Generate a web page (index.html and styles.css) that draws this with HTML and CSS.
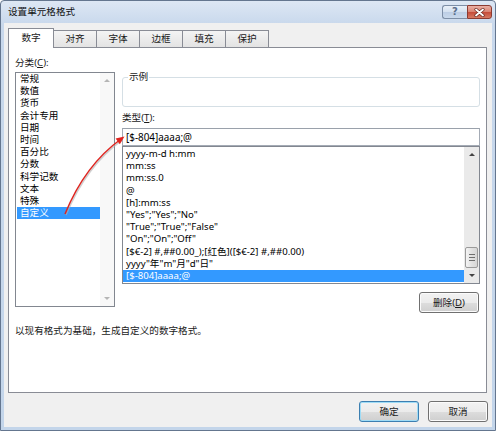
FILE: index.html
```html
<!DOCTYPE html>
<html lang="zh-CN">
<head>
<meta charset="utf-8">
<title>设置单元格格式</title>
<link rel="stylesheet" href="styles.css">
</head>
<body>
<div class="window">
  <div class="titlebar">
    <span class="title">设置单元格格式</span>
    <div class="caption-btns">
      <span class="cbtn help">?</span>
      <span class="cbtn close">
        <svg width="11" height="9" viewBox="0 0 11 9"><path d="M2 1.5 L9 7.5 M9 1.5 L2 7.5" stroke="#6b2a22" stroke-width="3.2" stroke-linecap="round"/><path d="M2 1.5 L9 7.5 M9 1.5 L2 7.5" stroke="#ffffff" stroke-width="1.8" stroke-linecap="round"/></svg>
      </span>
    </div>
  </div>
  <div class="client">
    <div class="tabs">
      <div class="tab active">数字</div>
      <div class="tab">对齐</div>
      <div class="tab">字体</div>
      <div class="tab">边框</div>
      <div class="tab">填充</div>
      <div class="tab">保护</div>
    </div>
    <div class="panel">
      <div class="main">
        <div class="left">
          <div class="label">分类(<u>C</u>):</div>
          <div class="listbox cat">
            <div class="items">
              <div class="item">常规</div>
              <div class="item">数值</div>
              <div class="item">货币</div>
              <div class="item">会计专用</div>
              <div class="item">日期</div>
              <div class="item">时间</div>
              <div class="item">百分比</div>
              <div class="item">分数</div>
              <div class="item">科学记数</div>
              <div class="item">文本</div>
              <div class="item">特殊</div>
              <div class="item selected">自定义</div>
            </div>
            <div class="vscroll disabled">
              <span class="sbtn"><span class="arr up"></span></span>
              <span class="track"></span>
              <span class="sbtn"><span class="arr down"></span></span>
            </div>
          </div>
        </div>
        <div class="right">
          <fieldset class="sample">
            <legend>示例</legend>
            <div class="sample-body"></div>
          </fieldset>
          <div class="label type-label">类型(<u>T</u>):</div>
          <div class="input">[$-804]aaaa;@</div>
          <div class="listbox fmt">
            <div class="items">
              <div class="item">yyyy-m-d h:mm</div>
              <div class="item">mm:ss</div>
              <div class="item">mm:ss.0</div>
              <div class="item">@</div>
              <div class="item">[h]:mm:ss</div>
              <div class="item">"Yes";"Yes";"No"</div>
              <div class="item">"True";"True";"False"</div>
              <div class="item">"On";"On";"Off"</div>
              <div class="item">[$€-2] #,##0.00_);[红色]([$€-2] #,##0.00)</div>
              <div class="item">yyyy"年"m"月"d"日"</div>
              <div class="item selected">[$-804]aaaa;@</div>
            </div>
            <div class="vscroll">
              <span class="sbtn"><span class="arr up"></span></span>
              <span class="track"></span>
              <span class="thumb"><i></i><i></i><i></i></span>
              <span class="sbtn"><span class="arr down"></span></span>
            </div>
          </div>
          <div class="btnrow">
            <button class="btn del">删除(<u>D</u>)</button>
          </div>
        </div>
      </div>
      <div class="desc">以现有格式为基础，生成自定义的数字格式。</div>
    </div>
    <div class="footer">
      <button class="btn default">确定</button>
      <button class="btn">取消</button>
    </div>
  </div>
  <svg class="arrow" width="496" height="431" viewBox="0 0 496 431">
    <path d="M66 215 Q 86 166 122 140" fill="none" stroke="#b0b0b0" stroke-width="1.6" opacity="0.6"/>
    <path d="M65 214 Q 85 165 121 139" fill="none" stroke="#e0241f" stroke-width="1.5"/>
    <polygon points="124.5,136.6 119.8,144.3 115.6,138.5" fill="#e0241f"/>
  </svg>
</div>
</body>
</html>
```

FILE: styles.css
```css
html, body {
  margin: 0;
  padding: 0;
}
body {
  width: 496px;
  height: 431px;
  overflow: hidden;
  font-family: "Noto Sans", "Noto Sans CJK SC", sans-serif;
  font-size: 9.6px;
  color: #1a1a1a;
  background: #ffffff;
}
.window {
  position: relative;
  width: 496px;
  height: 431px;
  box-sizing: border-box;
  border: 1px solid #64768f;
  border-radius: 4px 4px 0 0;
  background: linear-gradient(to bottom, #dde7f4 0, #c8d8ec 24px, #c3d5ea 100%);
  display: flex;
  flex-direction: column;
  padding: 0 3px 3px 3px;
}
.titlebar {
  height: 22px;
  flex: none;
  display: flex;
  justify-content: space-between;
  align-items: flex-start;
}
.title {
  padding: 5px 0 0 4px;
  line-height: 12px;
  color: #111;
}
.caption-btns {
  display: flex;
  margin-top: 4px;
}
.cbtn {
  width: 25px;
  height: 14px;
  box-sizing: border-box;
  display: flex;
  align-items: center;
  justify-content: center;
}
.help {
  border: 1px solid #7d8ea6;
  border-right: none;
  border-radius: 3px 0 0 3px;
  background: linear-gradient(to bottom, #e9f0f8 0, #d3e0ef 50%, #bccde4 51%, #c9d9ec 100%);
  color: #5c6f8c;
  font-family: "DejaVu Sans", sans-serif;
  font-weight: bold;
  font-size: 10px;
  line-height: 12px;
}
.close {
  border: 1px solid #8b3b32;
  border-radius: 0 3px 3px 0;
  background: linear-gradient(to bottom, #eab0a5 0, #d98170 50%, #c54a38 51%, #d77a63 100%);
}
.client {
  flex: 1;
  background: #f0f0f0;
  padding: 5px 4px 5px 4px;
  display: flex;
  flex-direction: column;
}
.tabs {
  height: 19px;
  display: flex;
  align-items: flex-end;
  position: relative;
  z-index: 2;
}
.tab {
  width: 44px;
  height: 17px;
  box-sizing: border-box;
  border: 1px solid #898c95;
  border-bottom: none;
  margin-left: -1px;
  background: linear-gradient(to bottom, #f4f4f4, #e3e3e3);
  display: flex;
  align-items: center;
  justify-content: center;
  line-height: 12px;
  color: #1a1a1a;
}
.tab.active {
  width: 46px;
  height: 20px;
  margin-left: 0;
  margin-bottom: -1px;
  background: #ffffff;
  position: relative;
  z-index: 3;
  padding-bottom: 1px;
}
.panel {
  height: 346px;
  box-sizing: border-box;
  border: 1px solid #898c95;
  background: #ffffff;
  margin-right: 1px;
  padding: 9px 6px 0 6px;
  display: flex;
  flex-direction: column;
  position: relative;
  z-index: 1;
}
.main {
  display: flex;
  gap: 7px;
  align-items: flex-start;
}
.left {
  width: 100px;
  flex: none;
}
.label {
  line-height: 12px;
  height: 12px;
}
.listbox {
  box-sizing: border-box;
  border: 1px solid #828790;
  background: #ffffff;
  display: flex;
  overflow: hidden;
}
.listbox .items {
  flex: 1;
  min-width: 0;
}
.item {
  line-height: 12.2px;
  height: 12.2px;
  padding-left: 3px;
  white-space: nowrap;
  color: #000;
}
.item.selected {
  background: #3399ff;
  color: #ffffff;
}
.cat {
  margin-top: 3px;
  height: 235px;
}
.cat .items {
  margin-left: 1px;
}
.vscroll {
  width: 15px;
  flex: none;
  display: flex;
  flex-direction: column;
  background: #eaeaea;
}
.vscroll.disabled {
  width: 14px;
  background: #f8f8f8;
}
.sbtn {
  height: 15px;
  flex: none;
  display: flex;
  align-items: center;
  justify-content: center;
}
.track {
  flex: 1;
}
.arr {
  width: 0;
  height: 0;
  border-left: 3px solid transparent;
  border-right: 3px solid transparent;
}
.arr.up {
  border-bottom: 3px solid #444;
}
.arr.down {
  border-top: 3px solid #444;
}
.disabled .arr.up {
  border-bottom-color: #b5b5b5;
}
.disabled .arr.down {
  border-top-color: #b5b5b5;
}
.thumb {
  height: 21px;
  margin: 0 1px 0 1px;
  box-sizing: border-box;
  border: 1px solid #9a9a9a;
  border-radius: 2px;
  background: linear-gradient(to right, #f4f4f4, #e2e2e2 50%, #d6d6d6);
  display: flex;
  flex-direction: column;
  align-items: center;
  justify-content: center;
  gap: 2px;
  flex: none;
}
.thumb i {
  display: block;
  width: 6px;
  height: 1px;
  background: #6e6e6e;
}
.right {
  width: 358px;
  flex: none;
  display: flex;
  flex-direction: column;
}
.sample {
  margin: 14px 0 0 0;
  padding: 0 0 0 5px;
  border: 1px solid #d5dfe5;
  border-radius: 3px;
  min-width: 0;
}
.sample legend {
  padding: 0 1px;
  line-height: 12px;
  color: #1a1a1a;
}
.sample-body {
  height: 23px;
}
.type-label {
  margin-top: 5px;
}
.input {
  margin-top: 4px;
  height: 18px;
  box-sizing: border-box;
  border: 1px solid #a4abb5;
  border-top-color: #9aa1ab;
  padding-left: 3px;
  line-height: 16px;
  color: #000;
  white-space: nowrap;
  font-size: 9.9px;
}
.fmt {
  height: 138px;
}
.fmt .items {
  padding-top: 1px;
}
.btnrow {
  display: flex;
  justify-content: flex-end;
  margin-top: 8px;
}
.btn {
  height: 21px;
  width: 60px;
  box-sizing: border-box;
  border: 1px solid #707070;
  border-radius: 3px;
  background: linear-gradient(to bottom, #f2f2f2 0, #ebebeb 50%, #dddddd 51%, #cfcfcf 100%);
  box-shadow: inset 0 0 0 1px #fbfbfb;
  font-family: inherit;
  font-size: 9.6px;
  color: #1a1a1a;
  padding: 0;
  line-height: 12px;
}
.del {
  margin-right: 1px;
}
.desc {
  margin-top: 12px;
  line-height: 12px;
}
.footer {
  display: flex;
  justify-content: flex-end;
  gap: 9px;
  margin-top: 8px;
}
.btn.default {
  border-color: #3c7fb1;
  box-shadow: inset 0 0 0 1px #9fdcf6;
}
.arrow {
  position: absolute;
  left: -1px;
  top: -1px;
  pointer-events: none;
  z-index: 5;
}
```
